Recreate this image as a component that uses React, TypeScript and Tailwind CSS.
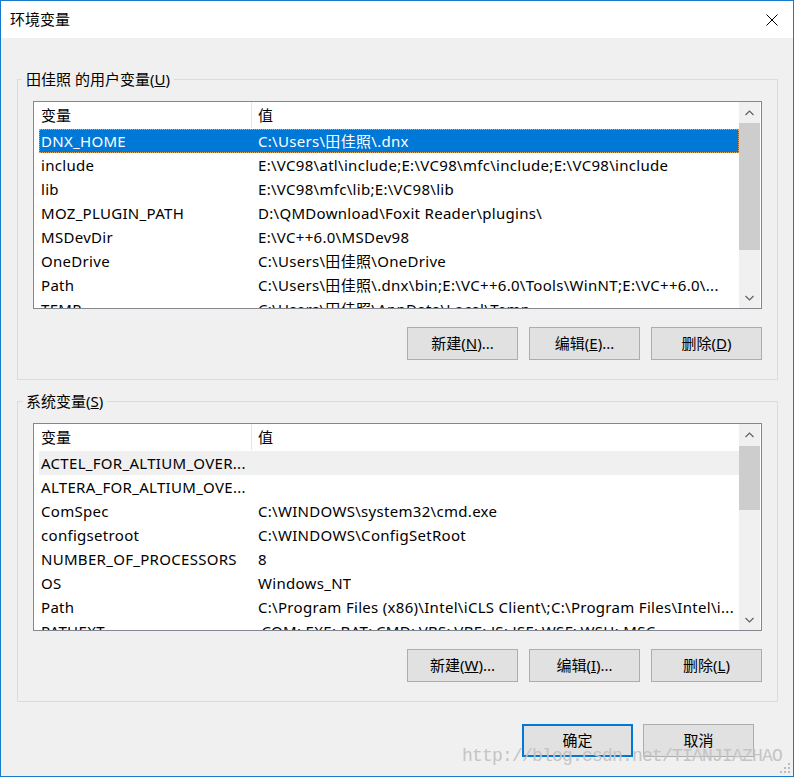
import React from "react";

type Row = [string, string];

const userRows: Row[] = [
  ["DNX_HOME", String.raw`C:\Users\田佳照\.dnx`],
  ["include", String.raw`E:\VC98\atl\include;E:\VC98\mfc\include;E:\VC98\include`],
  ["lib", String.raw`E:\VC98\mfc\lib;E:\VC98\lib`],
  ["MOZ_PLUGIN_PATH", String.raw`D:\QMDownload\Foxit Reader\plugins\ `.trim()],
  ["MSDevDir", String.raw`E:\VC++6.0\MSDev98`],
  ["OneDrive", String.raw`C:\Users\田佳照\OneDrive`],
  ["Path", String.raw`C:\Users\田佳照\.dnx\bin;E:\VC++6.0\Tools\WinNT;E:\VC++6.0\...`],
  ["TEMP", String.raw`C:\Users\田佳照\AppData\Local\Temp`],
];

const sysRows: Row[] = [
  ["ACTEL_FOR_ALTIUM_OVER...", ""],
  ["ALTERA_FOR_ALTIUM_OVE...", ""],
  ["ComSpec", String.raw`C:\WINDOWS\system32\cmd.exe`],
  ["configsetroot", String.raw`C:\WINDOWS\ConfigSetRoot`],
  ["NUMBER_OF_PROCESSORS", "8"],
  ["OS", "Windows_NT"],
  ["Path", String.raw`C:\Program Files (x86)\Intel\iCLS Client\;C:\Program Files\Intel\i...`],
  ["PATHEXT", ".COM;.EXE;.BAT;.CMD;.VBS;.VBE;.JS;.JSE;.WSF;.WSH;.MSC"],
];

function Chevron({ up }: { up?: boolean }) {
  return (
    <svg width="9" height="6" viewBox="0 0 9 6">
      <path
        d={up ? "M0.5 5 L4.5 1 L8.5 5" : "M0.5 1 L4.5 5 L8.5 1"}
        fill="none"
        stroke="#606060"
        strokeWidth="1.2"
      />
    </svg>
  );
}

function Scrollbar({ thumbTop, thumbH }: { thumbTop: number; thumbH: number }) {
  return (
    <div className="w-[21px] mr-[1px] bg-[#f0f0f0] flex flex-col">
      <div className="h-[21px] flex items-center justify-center">
        <Chevron up />
      </div>
      <div className="flex-1 flex flex-col">
        <div style={{ height: thumbTop }} />
        <div className="bg-[#cdcdcd]" style={{ height: thumbH }} />
      </div>
      <div className="h-[21px] flex items-center justify-center">
        <Chevron />
      </div>
    </div>
  );
}

function VarList({
  rows,
  selected,
  hover,
  thumbTop,
  thumbH,
}: {
  rows: Row[];
  selected?: number;
  hover?: number;
  thumbTop: number;
  thumbH: number;
}) {
  return (
    <div className="h-[208px] border border-[#828790] bg-white flex overflow-hidden">
      <div className="flex-1 flex flex-col overflow-hidden">
        <div className="h-[27px] shrink-0 flex">
          <div className="w-[217px] pl-[7px] h-[26px] flex items-center">变量</div>
          <div className="w-[1px] h-[26px] bg-[#e5e5e5]" />
          <div className="pl-[6px] h-[26px] flex items-center">值</div>
        </div>
        <div className="pl-[5px] flex flex-col tracking-[0.3px]">
          {rows.map(([k, v], i) => {
            const sel = i === selected;
            const hov = i === hover;
            return (
              <div
                key={i}
                className={
                  "h-[24px] shrink-0 flex items-center whitespace-nowrap " +
                  (sel
                    ? "bg-[#0078d7] text-white outline outline-1 outline-dotted outline-[#e0a860] -outline-offset-1"
                    : hov
                    ? "bg-[#f0f0f0]"
                    : "")
                }
              >
                <div className="w-[212px] shrink-0 pl-[2px] overflow-hidden">{k}</div>
                <div className="pl-[7px] overflow-hidden">{v}</div>
              </div>
            );
          })}
        </div>
      </div>
      <Scrollbar thumbTop={thumbTop} thumbH={thumbH} />
    </div>
  );
}

function Btn({ children, primary }: { children: React.ReactNode; primary?: boolean }) {
  return (
    <div
      className={
        "w-[111px] h-[33px] bg-[#e1e1e1] flex items-center justify-center " +
        (primary ? "border-2 border-[#0078d7]" : "border border-[#adadad]")
      }
    >
      {children}
    </div>
  );
}

function Group({
  label,
  children,
  buttons,
  className,
}: {
  label: React.ReactNode;
  children: React.ReactNode;
  buttons: React.ReactNode;
  className?: string;
}) {
  return (
    <fieldset className={"border border-[#dcdcdc] px-[15px] pb-[19px] m-0 min-w-0 " + (className || "")}>
      <legend className="ml-[-11px] px-[4px] leading-[20px] h-[20px]">{label}</legend>
      <div className="mt-[12px]">{children}</div>
      <div className="mt-[18px] flex justify-end gap-[11px]">{buttons}</div>
    </fieldset>
  );
}

export default function App() {
  return (
    <div className="w-[794px] h-[777px] border border-[#1979ca] bg-[#f0f0f0] flex flex-col relative overflow-hidden text-[15px] text-black font-['Noto_Sans','Noto_Sans_CJK_SC',sans-serif]">
      <div className="h-[37px] shrink-0 bg-white flex items-center justify-between pl-[9px] pr-[15px]">
        <span>环境变量</span>
        <svg width="12" height="12" viewBox="0 0 12 12">
          <path d="M0.5 0.5 L11.5 11.5 M11.5 0.5 L0.5 11.5" stroke="#000" strokeWidth="1" fill="none" />
        </svg>
      </div>
      <div className="pl-[16px] pr-[15px] flex flex-col">
        <Group
          className="mt-[31px]"
          label={
            <span>
              田佳照 的用户变量(<span className="underline">U</span>)
            </span>
          }
          buttons={
            <>
              <Btn>
                新建(<span className="underline">N</span>)...
              </Btn>
              <Btn>
                编辑(<span className="underline">E</span>)...
              </Btn>
              <Btn>
                删除(<span className="underline">D</span>)
              </Btn>
            </>
          }
        >
          <VarList rows={userRows} selected={0} thumbTop={0} thumbH={127} />
        </Group>
        <Group
          className="mt-[11px]"
          label={
            <span>
              系统变量(<span className="underline">S</span>)
            </span>
          }
          buttons={
            <>
              <Btn>
                新建(<span className="underline">W</span>)...
              </Btn>
              <Btn>
                编辑(<span className="underline">I</span>)...
              </Btn>
              <Btn>
                删除(<span className="underline">L</span>)
              </Btn>
            </>
          }
        >
          <VarList rows={sysRows} hover={0} thumbTop={1} thumbH={64} />
        </Group>
        <div className="mt-[22px] mr-[24px] flex justify-end gap-[10px]">
          <Btn primary>确定</Btn>
          <Btn>取消</Btn>
        </div>
      </div>
      <div className="absolute left-[461px] top-[744px] font-['Liberation_Mono',monospace] text-[18px] leading-[22px] tracking-[-0.8px] text-[#c4c4c4] whitespace-nowrap pointer-events-none">
        http://blog.csdn.net/TIANJIAZHAO
      </div>
      <svg className="absolute right-[2px] bottom-[2px]" width="12" height="12" viewBox="0 0 12 12">
        <rect x="9" y="1" width="2" height="2" fill="#bcbcbc" />
        <rect x="5" y="5" width="2" height="2" fill="#bcbcbc" />
        <rect x="9" y="5" width="2" height="2" fill="#bcbcbc" />
        <rect x="1" y="9" width="2" height="2" fill="#bcbcbc" />
        <rect x="5" y="9" width="2" height="2" fill="#bcbcbc" />
        <rect x="9" y="9" width="2" height="2" fill="#bcbcbc" />
      </svg>
    </div>
  );
}
